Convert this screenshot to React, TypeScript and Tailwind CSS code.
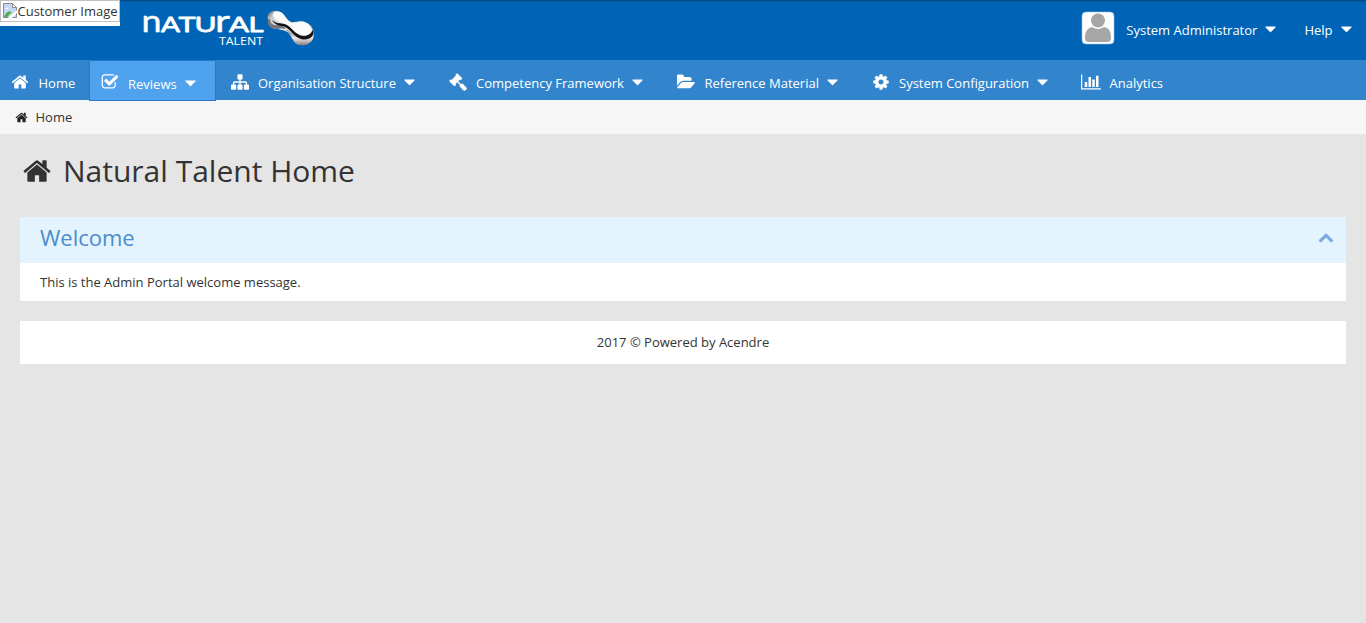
import React from "react";

type IconProps = { d: string; w?: number; className?: string };

const HOME =
  "M1472 992v480q0 26-19 45t-45 19h-384v-384h-256v384h-384q-26 0-45-19t-19-45v-480q0-1 .5-3t.5-3l575-474 575 474q1 2 1 6zm223-69l-62 74q-8 9-21 11h-3q-13 0-21-7l-692-577-692 577q-12 8-24 7-13-2-21-11l-62-74q-8-10-7-23.5t11-21.5l719-599q32-26 76-26t76 26l244 204v-195q0-14 9-23t23-9h192q14 0 23 9t9 23v408l219 182q10 8 11 21.5t-7 23.500z";
const CHECK =
  "M1472 930v318q0 119-84.5 203.5t-203.5 84.5h-832q-119 0-203.5-84.5t-84.5-203.5v-832q0-119 84.5-203.5t203.5-84.5h832q63 0 117 25 15 7 18 23 3 17-9 29l-49 49q-10 10-23 10-3 0-9-2-23-6-45-6h-832q-66 0-113 47t-47 113v832q0 66 47 113t113 47h832q66 0 113-47t47-113v-254q0-13 9-22l64-64q10-10 23-10 6 0 12 3 20 8 20 29zm231-489l-814 814q-24 24-57 24t-57-24l-430-430q-24-24-24-57t24-57l110-110q24-24 57-24t57 24l263 263 647-647q24-24 57-24t57 24l110 110q24 24 24 57t-24 57z";
const SITEMAP =
  "M1792 1248v320q0 40-28 68t-68 28h-320q-40 0-68-28t-28-68v-320q0-40 28-68t68-28h96v-192h-512v192h96q40 0 68 28t28 68v320q0 40-28 68t-68 28h-320q-40 0-68-28t-28-68v-320q0-40 28-68t68-28h96v-192h-512v192h96q40 0 68 28t28 68v320q0 40-28 68t-68 28h-320q-40 0-68-28t-28-68v-320q0-40 28-68t68-28h96v-192q0-52 38-90t90-38h512v-192h-96q-40 0-68-28t-28-68v-320q0-40 28-68t68-28h320q40 0 68 28t28 68v320q0 40-28 68t-68 28h-96v192h512q52 0 90 38t38 90v192h96q40 0 68 28t28 68z";
const GAVEL =
  "M1771 1536q0 53-37 90l-107 108q-39 37-91 37-53 0-90-37l-363-364q-38-36-38-90 0-53 43-96l-256-256-126 126q-14 14-34 14t-34-14q2 2 12.5 12t12.5 13 10 11.5 10 13.5 6 13.5 5.5 16.5 1.5 18q0 38-28 68-3 3-16.5 18t-19 20.5-18.5 16.5-22 15.5-22 9-26 4.5q-40 0-68-28l-408-408q-28-28-28-68 0-13 4.5-26t9-22 15.5-22 16.5-18.5 20.5-19 18-16.5q30-28 68-28 10 0 18 1.5t16.5 5.5 13.5 6 13.5 10 11.5 10 13 12.5 12 12.5q-14-14-14-34t14-34l348-348q14-14 34-14t34 14q-2-2-12.5-12t-12.5-13-10-11.5-10-13.5-6-13.5-5.5-16.5-1.5-18q0-38 28-68 3-3 16.5-18t19-20.5 18.5-16.5 22-15.5 22-9 26-4.5q40 0 68 28l408 408q28 28 28 68 0 13-4.5 26t-9 22-15.5 22-16.5 18.5-20.5 19-18 16.5q-30 28-68 28-10 0-18-1.5t-16.5-5.5-13.5-6-13.5-10-11.5-10-13-12.5-12-12.500q14 14 14 34t-14 34l-126 126 256 256q43-43 96-43 52 0 91 37l363 363q37 39 37 91z";
const FOLDER =
  "M1815 952q0 31-31 66l-336 396q-43 51-120.5 86.5t-143.5 35.5h-1088q-34 0-60.5-13t-26.5-43q0-31 31-66l336-396q43-51 120.5-86.5t143.5-35.5h1088q34 0 60.5 13t26.5 43zm-343-344v160h-832q-94 0-197 47.5t-164 119.5l-337 396-5 6q0-4-.5-12.5t-.5-12.5v-960q0-92 66-158t158-66h320q92 0 158 66t66 158v32h544q92 0 158 66t66 158z";
const COG =
  "M1152 896q0-106-75-181t-181-75-181 75-75 181 75 181 181 75 181-75 75-181zm512-109v222q0 12-8 23t-20 13l-185 28q-19 54-39 91 35 50 107 138 10 12 10 25t-9 23q-27 37-99 108t-94 71q-12 0-26-9l-138-108q-44 23-91 38-16 136-29 186-7 28-36 28h-222q-14 0-24.5-8.5t-11.5-21.5l-28-184q-49-16-90-37l-141 107q-10 9-25 9-14 0-25-11-126-114-165-168-7-10-7-23 0-12 8-23 15-21 51-66.5t54-70.5q-27-50-41-99l-183-27q-13-2-21-12.5t-8-23.5v-222q0-12 8-23t19-13l186-28q14-46 39-92-40-57-107-138-10-12-10-24 0-10 9-23 26-36 98.5-107.5t94.5-71.5q13 0 26 10l138 107q44-23 91-38 16-136 29-186 7-28 36-28h222q14 0 24.5 8.5t11.5 21.5l28 184q49 16 90 37l142-107q9-9 24-9 13 0 25 10 129 119 165 170 7 8 7 22 0 12-8 23-15 21-51 66.5t-54 70.5q26 50 41 98l183 28q13 2 21 12.5t8 23.5z";
const CHART =
  "M640 896v512h-256v-512h256zm384-512v1024h-256v-1024h256zm1024 1152v128h-2048v-1536h128v1408h1920zm-640-896v768h-256v-768h256zm384-384v1152h-256v-1152h256z";
const CARET =
  "M1024 704q0 26-19 45l-448 448q-19 19-45 19t-45-19l-448-448q-19-19-19-45t19-45 45-19h896q26 0 45 19t19 45z";
const CHEVRON =
  "M1683 1331l-166 165q-19 19-45 19t-45-19l-531-531-531 531q-19 19-45 19t-45-19l-166-165q-19-19-19-45.500t19-45.500l742-741q19-19 45-19t45 19l742 741q19 19 19 45.500t-19 45.500z";

function Icon({ d, w = 1792, className }: IconProps) {
  return (
    <svg viewBox={`0 0 ${w} 1792`} fill="currentColor" className={`shrink-0 ${className ?? ""}`}>
      <path d={d} />
    </svg>
  );
}

function Caret({ className }: { className?: string }) {
  return <Icon d={CARET} w={1024} className={`h-[18px] w-[11px] ${className ?? ""}`} />;
}

function Logo() {
  return (
    <svg className="h-[52px] w-[180px]" viewBox="138 0 180 52">
      <defs>
        <linearGradient id="metal" x1="0" y1="0" x2="1" y2="0.7">
          <stop offset="0" stopColor="#55575c" />
          <stop offset="0.14" stopColor="#c9c9cb" />
          <stop offset="0.5" stopColor="#f4f4f4" />
          <stop offset="1" stopColor="#a49a98" />
        </linearGradient>
        <linearGradient id="under" x1="0" y1="0" x2="0" y2="1">
          <stop offset="0" stopColor="#4c4a4d" />
          <stop offset="0.55" stopColor="#f1ecea" />
          <stop offset="1" stopColor="#8a8082" />
        </linearGradient>
      </defs>
      <g fill="#fff" stroke="#fff" strokeWidth="0.8" strokeLinejoin="round" fontFamily="Lato, sans-serif">
        <text x="141.500" y="32" fontSize="30" strokeWidth="0.4" textLength="20" lengthAdjust="spacingAndGlyphs">n</text>
        <text x="161" y="32" fontSize="21.500" textLength="19" lengthAdjust="spacingAndGlyphs">A</text>
        <text x="178.500" y="32" fontSize="21.500" textLength="17" lengthAdjust="spacingAndGlyphs">T</text>
        <text x="194.500" y="32" fontSize="21.500" textLength="22" lengthAdjust="spacingAndGlyphs">U</text>
        <text x="215" y="32" fontSize="30" strokeWidth="0.4" textLength="15" lengthAdjust="spacingAndGlyphs">r</text>
        <text x="229" y="32" fontSize="21.500" textLength="20" lengthAdjust="spacingAndGlyphs">A</text>
        <text x="248.500" y="32" fontSize="21.500" textLength="15" lengthAdjust="spacingAndGlyphs">L</text>
      </g>
      <text x="219" y="45" fill="#fff" fontFamily="Open Sans, sans-serif" fontSize="11" textLength="44" lengthAdjust="spacingAndGlyphs">TALENT</text>
      <path d="M268 20C266 14 271 10 277 11C285 12 286 20 291 22C295 23 299 20 305 22C311 24 314 29 314 35C313 42 307 46 301 45C294 45 293 39 290 35C287 30 282 30 277 29C271 29 268 25 268 20Z" fill="url(#metal)" />
      <path d="M285 29C291 32 292 35 297 37C303 41 311 39 313.500 33C315 41 308 45.500 301 45C294 44 293 38 290 35Q288 31 285 29Z" fill="url(#under)" />
      <path d="M270 19Q270 25 276 25Q282 24 286 29Q281 28 277 29C270 29 267 25 268 19Z" fill="#77777b" />
      <path d="M274 12C281 10 284 14 286 19C289 24 294 24 298 22C304 20 311 24 312 30C311 36 304 37 299 34C292 31 288 24 281 22C275 21 271 15 274 12Z" fill="#fbfbfb" />
      <path d="M272 20C277 25 282 22 287 25C293 29 296 35 303 36Q310 36 313 30C315 37 308 41 301 39C294 37 291 30 285 27C280 25 275 26 272 20Z" fill="#141417" />
    </svg>
  );
}

type Item = {
  label: string;
  d: string;
  vw?: number;
  icon: string;
  box: string;
  gap: string;
  caret?: boolean;
};

const items: Item[] = [
  { label: "Home", d: HOME, icon: "h-[18px] w-[18px]", box: "w-[89px] pl-[11px]", gap: "ml-[9.5px]" },
  { label: "Organisation Structure", d: SITEMAP, icon: "h-[18px] w-[18px]", box: "w-[218px] pl-[15px]", gap: "ml-[9px]", caret: true },
  { label: "Competency Framework", d: GAVEL, icon: "h-[18px] w-[18px]", box: "w-[227.5px] pl-[15px]", gap: "ml-[9px]", caret: true },
  { label: "Reference Material", d: FOLDER, vw: 1920, icon: "h-[18px] w-[19px]", box: "w-[195px] pl-[15px]", gap: "ml-[9px]", caret: true },
  { label: "System Configuration", d: COG, icon: "h-[18px] w-[18px]", box: "w-[209.5px] pl-[15px]", gap: "ml-[9.5px]", caret: true },
  { label: "Analytics", d: CHART, vw: 2048, icon: "h-[18px] w-[20px]", box: "pl-[15px]", gap: "ml-[8.5px]" },
];

function NavItem({ item }: { item: Item }) {
  return (
    <div className={`flex h-10 shrink-0 items-center pt-[6px] ${item.box}`}>
      <Icon d={item.d} w={item.vw} className={`-mt-[2px] ${item.icon}`} />
      <span className={item.gap}>{item.label}</span>
      {item.caret && <Caret className="ml-[8px] -mt-[2px]" />}
    </div>
  );
}

export default function App() {
  return (
    <div className="min-h-screen w-full bg-[#e5e5e5] font-['Open_Sans',sans-serif] text-[13px] leading-5 text-[#333]">
      <header className="flex h-[60px] items-start bg-[#0064b6] text-white shadow-[inset_0_2px_2px_-1px_rgba(0,0,0,0.35)]">
        <div className="h-[26px] w-[120px] bg-white text-[#333]">
          <div className="flex h-[22px] w-[120px] items-center overflow-hidden border border-[#c0c0c0] pb-[1px] pl-[0.5px] whitespace-nowrap">
            <svg className="h-4 w-4 shrink-0" viewBox="0 0 16 16">
              <path d="M1.500 .5h9l4 4v10h-13z" fill="#c6d8f5" stroke="#8a8a8a" />
              <path d="M10.500 .5v4h4z" fill="#fff" stroke="#8a8a8a" />
              <path d="M3 6q2-3 4 0z" fill="#fff" />
              <path d="M2 14q3-7 8-5l-5 5z" fill="#4caf3a" />
              <path d="M6 15l9-8v3l-5 5z" fill="#fff" />
            </svg>
            <span>Customer Image</span>
          </div>
        </div>
        <div className="ml-[18px]">
          <Logo />
        </div>
        <div className="ml-auto flex h-[60px] items-center pr-[14.5px]">
          <svg className="-mt-[5px] h-[34px] w-[34px]" viewBox="0 0 34 34">
            <rect x="1" y="1" width="32" height="32" rx="4" fill="#fff" stroke="#9cc3e4" strokeWidth="0.6" />
            <circle cx="17" cy="9.500" r="7" fill="#a6a6a6" />
            <path d="M4 27C4 20 7 17 11 16Q17 20 23 16C28 17 30 20 30 27Q30 31 26 31H8Q4 31 4 27Z" fill="#a6a6a6" />
          </svg>
          <span className="ml-[11px]">System Administrator</span>
          <Caret className="-mt-[2px] ml-[8px]" />
          <span className="ml-[28px]">Help</span>
          <Caret className="-mt-[2px] ml-[8px]" />
        </div>
      </header>

      <nav className="flex h-10 bg-[#3285cd] text-white">
        <NavItem item={items[0]} />
        <div className="z-10 flex h-[41px] w-[127px] shrink-0 items-center border border-[#2878d0] bg-[#4ea2ee] pl-[11px] pt-[6px]">
          <Icon d={CHECK} className="-mt-[4px] h-[18px] w-[18px]" />
          <span className="ml-[9px]">Reviews</span>
          <Caret className="ml-[8px] -mt-[2px]" />
        </div>
        {items.slice(1).map((item) => (
          <NavItem key={item.label} item={item} />
        ))}
      </nav>

      <div className="flex h-[34px] items-center bg-[#f6f6f6] pl-[14.5px]">
        <Icon d={HOME} className="h-[13px] w-[13px] text-[#222]" />
        <span className="ml-[8px]">Home</span>
      </div>

      <main className="px-5">
        <h1 className="flex h-[83px] items-center pb-[9px] pl-[2px] text-[30px] font-normal leading-9">
          <Icon d={HOME} className="h-[30px] w-[30px]" />
          <span className="ml-[11px]">Natural Talent Home</span>
        </h1>
        <section className="bg-white">
          <div className="flex h-[46px] items-center justify-between bg-[#e3f4fe] pl-5 pr-3">
            <h2 className="pb-[6px] text-[22px] leading-7 text-[#4b8ccb]">Welcome</h2>
            <Icon d={CHEVRON} className="-mt-[6px] h-[16px] w-[16px] text-[#7baadc]" />
          </div>
          <p className="h-[38px] pl-5 pt-[9px]">This is the Admin Portal welcome message.</p>
        </section>
        <footer className="mt-5 h-[43px] bg-white pt-[11px] text-center">2017 © Powered by Acendre</footer>
      </main>
    </div>
  );
}
